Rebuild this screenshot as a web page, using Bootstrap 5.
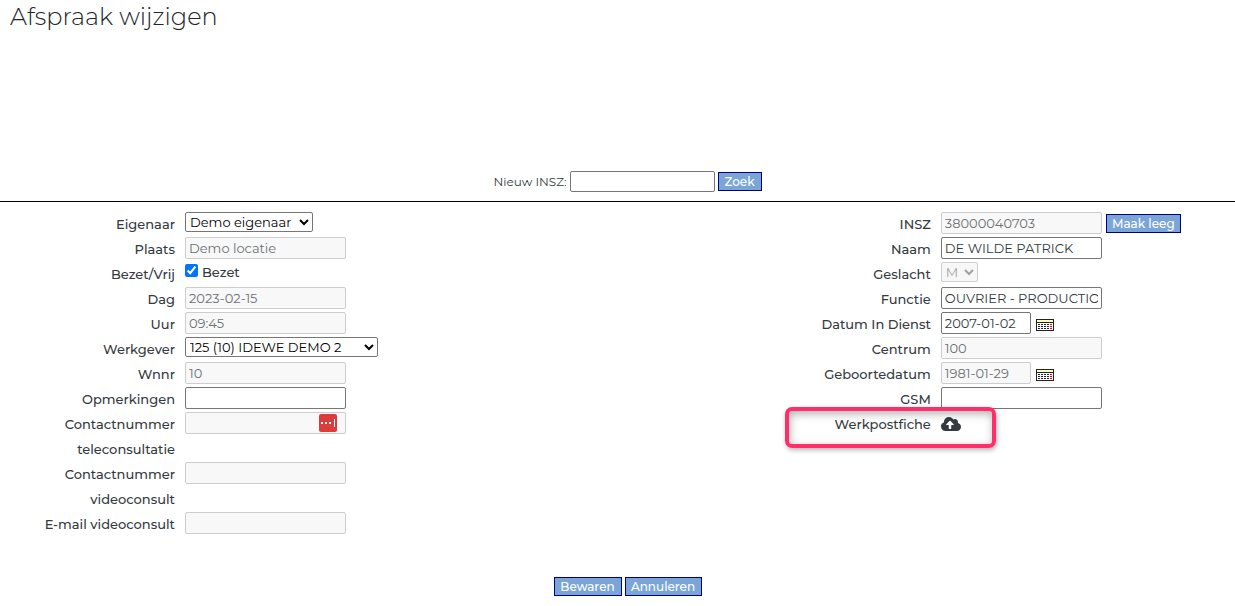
<!DOCTYPE html>
<html lang="nl">
<head>
<meta charset="utf-8">
<meta name="viewport" content="width=device-width, initial-scale=1">
<title>Afspraak wijzigen</title>
<link href="https://cdn.jsdelivr.net/npm/bootstrap@5.3.0/dist/css/bootstrap.min.css" rel="stylesheet">
<style>
  body { font-family: Montserrat, Inter, "Open Sans", sans-serif; font-size: 13px; font-weight: 500; line-height: 25px; color: #343a40; background: #fff; }
  .page-title { font-size: 24px; font-weight: 300; line-height: 34px; padding-left: 10px; color: #212529; }
  .search-bar { margin-top: 137px; padding: 0 0 9px 20px; border-bottom: 1px solid #000; font-size: 12px; font-weight: 400; line-height: 21px; gap: 3px; color: #343a40; }
  .columns { padding-top: 9px; }
  .main-col { width: 61.2%; }
  .form-line { min-height: 25px; }
  .form-line > label, .form-line > .line-label { width: 185px; padding: 1px 10px 0 0; margin-bottom: -1px; text-align: right; flex-shrink: 0; }
  .field { width: 161px; height: 22px; margin-top: 1px; padding: 0 3px; border: 1px solid #767676; border-radius: 2px; background: #fff; color: #343a40; font-size: 13px; font-weight: 400; line-height: 20px; }
  .field:disabled { border-color: #cdcdcd; background: #f8f8f8; color: #6c7074; }
  .field-search { width: 145px; margin: 0; height: 21px; }
  .field-date { width: 90px; }
  .pick { height: 20px; margin-top: 1px; padding: 0; border: 1px solid #767676; border-radius: 2px; background: #fff; color: #000; font-size: 13px; font-weight: 400; line-height: 18px; }
  .pick:disabled { border-color: #bbb; background: #f5f5f5; color: #777; opacity: .7; }
  .pick-owner { width: 128px; }
  .pick-employer { width: 193px; }
  .pick-sex { width: 37px; }
  .tick { width: 13px; height: 13px; margin: 3px 4px 0 0; }
  .tick-text { line-height: 23px; }
  .act { height: 19px; padding: 0; border: 1px solid #000080; border-radius: 0; background: #7aa5d6; color: #fff; font-size: 12px; font-weight: 500; line-height: 17px; white-space: nowrap; }
  .act:hover { background: #6795c9; }
  .act-search { width: 44px; }
  .act-clear { width: 75px; margin: 3px 0 0 4px; }
  .act-save { width: 68px; }
  .act-cancel { width: 77px; }
  .icon-btn { padding: 0; border: 0; background: none; line-height: 0; color: #343a40; }
  .cal { margin: 8px 0 0 5px; height: 12px; }
  .filler { right: 9px; top: 3px; }
  .highlight { left: 29px; top: -4px; width: 211px; height: 41px; border: 4px solid #ff2d68; border-radius: 7px; box-shadow: 1px 2px 5px rgba(0,0,0,.3), inset 1px 3px 9px rgba(0,0,0,.3); pointer-events: none; }
  .actions { margin-top: 41px; padding-left: 20px; gap: 3px; }
</style>
</head>
<body>
<svg class="d-none" aria-hidden="true">
  <symbol id="calendar" viewBox="0 0 18 12">
    <path fill="#222" d="M0 0h18v12H0z"/><path fill="#ffffb8" d="M1 1h16v2H1z"/><path fill="#fff" d="M1 4h16v7H1z"/>
    <path stroke="#222" stroke-dasharray="2 1" d="M2 5.500h11M2 7.500h11M2 9.500h11"/>
    <path stroke="#f00" d="M14 5.500h2M14 7.500h2M14 9.500h2"/>
  </symbol>
</svg>
<h1 class="page-title mb-0">Afspraak wijzigen</h1>
<form>
  <div class="search-bar d-flex justify-content-center align-items-center">
    <label for="newInsz">Nieuw INSZ:</label>
    <input id="newInsz" class="field field-search" type="text">
    <button type="button" class="act act-search">Zoek</button>
  </div>

  <div class="columns d-flex">
    <div class="main-col">
      <div class="form-line d-flex align-items-start"><label for="owner">Eigenaar</label><select id="owner" class="pick pick-owner"><option>Demo eigenaar</option></select></div>
      <div class="form-line d-flex align-items-start"><label for="place">Plaats</label><input id="place" class="field" value="Demo locatie" disabled></div>
      <div class="form-line d-flex align-items-start"><span class="line-label">Bezet/Vrij</span><input id="busy" class="tick" type="checkbox" checked><label for="busy" class="tick-text w-auto p-0">Bezet</label></div>
      <div class="form-line d-flex align-items-start"><label for="day">Dag</label><input id="day" class="field" value="2023-02-15" disabled></div>
      <div class="form-line d-flex align-items-start"><label for="hour">Uur</label><input id="hour" class="field" value="09:45" disabled></div>
      <div class="form-line d-flex align-items-start"><label for="employer">Werkgever</label><select id="employer" class="pick pick-employer"><option>125 (10) IDEWE DEMO 2</option></select></div>
      <div class="form-line d-flex align-items-start"><label for="wnnr">Wnnr</label><input id="wnnr" class="field" value="10" disabled></div>
      <div class="form-line d-flex align-items-start"><label for="notes">Opmerkingen</label><input id="notes" class="field" type="text"></div>
      <div class="form-line d-flex align-items-start"><label for="tele">Contactnummer<br>teleconsultatie</label>
        <div class="position-relative d-flex"><input id="tele" class="field" type="text" disabled>
          <svg class="filler position-absolute" width="18" height="18" viewBox="0 0 18 18" aria-hidden="true"><rect width="18" height="18" rx="2" fill="#dc3c3c"/><path fill="#fff" d="M2 8h2v2H2zM6 8h2v2H6zM10 8h2v2h-2zM15 5h1v8h-1z"/></svg>
        </div>
      </div>
      <div class="form-line d-flex align-items-start"><label for="video">Contactnummer<br>videoconsult</label><input id="video" class="field" type="text" disabled></div>
      <div class="form-line d-flex align-items-start"><label for="mail">E-mail videoconsult</label><input id="mail" class="field" type="text" disabled></div>
    </div>

    <div class="flex-grow-1">
      <div class="form-line d-flex align-items-start"><label for="insz">INSZ</label><input id="insz" class="field" value="38000040703" disabled><button type="button" class="act act-clear">Maak leeg</button></div>
      <div class="form-line d-flex align-items-start"><label for="name">Naam</label><input id="name" class="field" value="DE WILDE PATRICK"></div>
      <div class="form-line d-flex align-items-start"><label for="sex">Geslacht</label><select id="sex" class="pick pick-sex" disabled><option>M</option></select></div>
      <div class="form-line d-flex align-items-start"><label for="job">Functie</label><input id="job" class="field" value="OUVRIER - PRODUCTION"></div>
      <div class="form-line d-flex align-items-start"><label for="start">Datum In Dienst</label><input id="start" class="field field-date" value="2007-01-02"><button type="button" class="icon-btn cal" aria-label="Kies datum in dienst"><svg width="18" height="12" shape-rendering="crispEdges"><use href="#calendar"/></svg></button></div>
      <div class="form-line d-flex align-items-start"><label for="centre">Centrum</label><input id="centre" class="field" value="100" disabled></div>
      <div class="form-line d-flex align-items-start"><label for="birth">Geboortedatum</label><input id="birth" class="field field-date" value="1981-01-29" disabled><button type="button" class="icon-btn cal" aria-label="Kies geboortedatum"><svg width="18" height="12" shape-rendering="crispEdges"><use href="#calendar"/></svg></button></div>
      <div class="form-line d-flex align-items-start"><label for="gsm">GSM</label><input id="gsm" class="field" type="text"></div>
      <div class="form-line d-flex align-items-start position-relative"><label for="upload">Werkpostfiche</label>
        <button id="upload" type="button" class="icon-btn mt-1"><svg width="20" height="18" viewBox="0 0 640 512" aria-hidden="true"><path fill="currentColor" d="M537.600 226.600c4.100-10.700 6.400-22.400 6.400-34.600 0-53-43-96-96-96-19.700 0-38.100 6-53.300 16.200C367 64.200 315.300 32 256 32c-88.400 0-160 71.600-160 160 0 2.700.1 5.400.2 8.100C40.200 219.800 0 273.200 0 336c0 79.500 64.500 144 144 144h368c70.700 0 128-57.300 128-128 0-61.900-44-113.600-102.400-125.400zM393.400 288H328v112c0 8.800-7.200 16-16 16h-48c-8.800 0-16-7.200-16-16V288h-65.400c-14.300 0-21.400-17.200-11.300-27.300l105.400-105.400c6.200-6.200 16.400-6.200 22.600 0l105.400 105.400c10.100 10.100 2.900 27.300-11.300 27.300z"/></svg></button>
        <div class="highlight position-absolute"></div>
      </div>
    </div>
  </div>

  <div class="actions d-flex justify-content-center">
    <button type="submit" class="act act-save">Bewaren</button>
    <button type="button" class="act act-cancel">Annuleren</button>
  </div>
</form>
<script src="https://cdn.jsdelivr.net/npm/bootstrap@5.3.0/dist/js/bootstrap.bundle.min.js"></script>
</body>
</html>
